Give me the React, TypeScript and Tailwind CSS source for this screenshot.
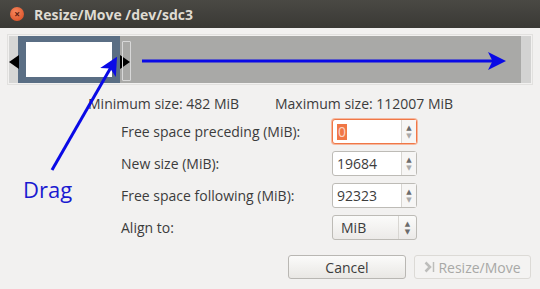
import React from "react";

const font = { fontFamily: '"Open Sans", "DejaVu Sans", sans-serif' };

const Spin = ({ value, focused }: { value: string; focused?: boolean }) => (
  <div
    className={`flex h-[25px] w-[85px] rounded-[3px] border bg-white ${
      focused ? "border-[#f07746] shadow-[0_0_0_1px_#f5b89f]" : "border-[#bdbbb6]"
    }`}
  >
    <div className="flex flex-1 items-center pl-[4px] text-[14px] text-[#3c3c3c]">
      {focused ? (
        <span className="bg-[#f07746] px-[1px] leading-[16px] text-[#fbd6c6]">{value}</span>
      ) : (
        value
      )}
    </div>
    {/* spinner arrows */}
    <div className="flex w-[15px] flex-col items-center justify-center border-l border-[#d8d6d2] bg-[#f7f6f5] text-[7px] leading-[8px] text-[#6b6b6b]">
      <span>▲</span>
      <span className="text-[#a9a9a9]">▼</span>
    </div>
  </div>
);

const App = () => {
  return (
    <div
      className="relative h-[289px] w-[540px] overflow-hidden bg-[#f2f1f0]"
      style={font}
    >
      {/* title bar */}
      <div className="flex h-[28px] items-center gap-[10px] bg-gradient-to-b from-[#4a4944] to-[#3a3935] pl-[10px]">
        <div className="flex h-[14px] w-[14px] items-center justify-center rounded-full bg-[radial-gradient(circle_at_40%_35%,#f7885f,#d5471c)] text-[10px] font-bold leading-none text-[#5a2010]">
          ×
        </div>
        <span className="text-[14px] font-bold text-[#dfdbd2]">Resize/Move /dev/sdc3</span>
      </div>

      {/* partition bar */}
      <div className="mx-[7px] mt-[6px] h-[51px] border border-[#e2e1df] p-[1px]">
        <div className="relative flex h-full bg-[#a9a9a7]">
          <div className="w-[9px] bg-[#d6d6d5]" />
          <div className="flex w-[102px] items-center justify-center bg-[#5a6e84] px-[8px] py-[6px]">
            <div className="h-full w-full bg-white" />
          </div>
          <div className="flex-1" />
          <div className="w-[10px] bg-[#d3d3d2]" />
          {/* drag handles */}
          <div className="absolute left-[0px] top-[19px] h-0 w-0 border-y-[7px] border-r-[10px] border-y-transparent border-r-black" />
          <div className="absolute left-[111px] top-[19px] h-0 w-0 border-y-[7px] border-l-[10px] border-y-transparent border-l-black" />
          <div className="absolute left-[113px] top-[5px] h-[40px] w-[9px] rounded-[1px] border border-[#d8d8d8]" />
        </div>
      </div>

      {/* limits */}
      <div className="mt-[8px] flex text-[14px] text-[#3c3c3c]">
        <span className="ml-[88px] w-[187px]">Minimum size: 482 MiB</span>
        <span>Maximum size: 112007 MiB</span>
      </div>

      {/* form */}
      <div className="ml-[121px] mt-[5px] grid grid-cols-[211px_85px] gap-y-[7px] text-[14px] text-[#3c3c3c]">
        <span className="self-center">Free space preceding (MiB):</span>
        <Spin value="0" focused />
        <span className="self-center">New size (MiB):</span>
        <Spin value="19684" />
        <span className="self-center">Free space following (MiB):</span>
        <Spin value="92323" />
        <span className="self-center">Align to:</span>
        <div className="flex h-[25px] w-[85px] rounded-[3px] border border-[#bdbbb6] bg-gradient-to-b from-[#fbfbfa] to-[#eceae8]">
          <div className="flex flex-1 items-center pl-[8px] text-[14px]">MiB</div>
          <div className="flex w-[18px] flex-col items-center justify-center border-l border-[#d8d6d2] text-[7px] leading-[8px] text-[#6b6b6b]">
            <span>▲</span>
            <span>▼</span>
          </div>
        </div>
      </div>

      {/* buttons */}
      <div className="ml-[288px] mt-[15px] flex gap-[8px] text-[14px]">
        <button className="h-[24px] w-[118px] rounded-[3px] border border-[#b9b7b3] bg-gradient-to-b from-[#fbfbfa] to-[#e9e7e4] text-[#3c3c3c]">
          Cancel
        </button>
        <button className="flex h-[24px] w-[117px] items-center justify-center gap-[3px] rounded-[3px] border border-[#dcdad6] bg-[#f4f3f2] text-[#a8a8a6]">
          <svg width="11" height="12" viewBox="0 0 11 12">
            <path d="M1.5 1.5 L6 6 L1.5 10.5" fill="none" stroke="#bdbdbb" strokeWidth="2.5" />
            <path d="M9.5 1 V11" stroke="#bdbdbb" strokeWidth="1.5" />
          </svg>
          Resize/Move
        </button>
      </div>

      {/* annotation arrows */}
      <svg className="absolute left-0 top-0" width="540" height="289">
        <defs>
          <marker id="head" markerWidth="6" markerHeight="6" refX="4" refY="3" orient="auto" markerUnits="strokeWidth">
            <path d="M0 0 L6 3 L0 6 L1.5 3 Z" fill="#0a0ae6" />
          </marker>
        </defs>
        <line x1="142" y1="61" x2="500" y2="61" stroke="#0a0ae6" strokeWidth="3" markerEnd="url(#head)" />
        <line x1="52" y1="170" x2="114" y2="62" stroke="#0a0ae6" strokeWidth="3" markerEnd="url(#head)" />
      </svg>
      <div className="absolute left-[23px] top-[174px] text-[22px] leading-[30px] text-[#1a1ad0]">Drag</div>
    </div>
  );
};

export default App;
